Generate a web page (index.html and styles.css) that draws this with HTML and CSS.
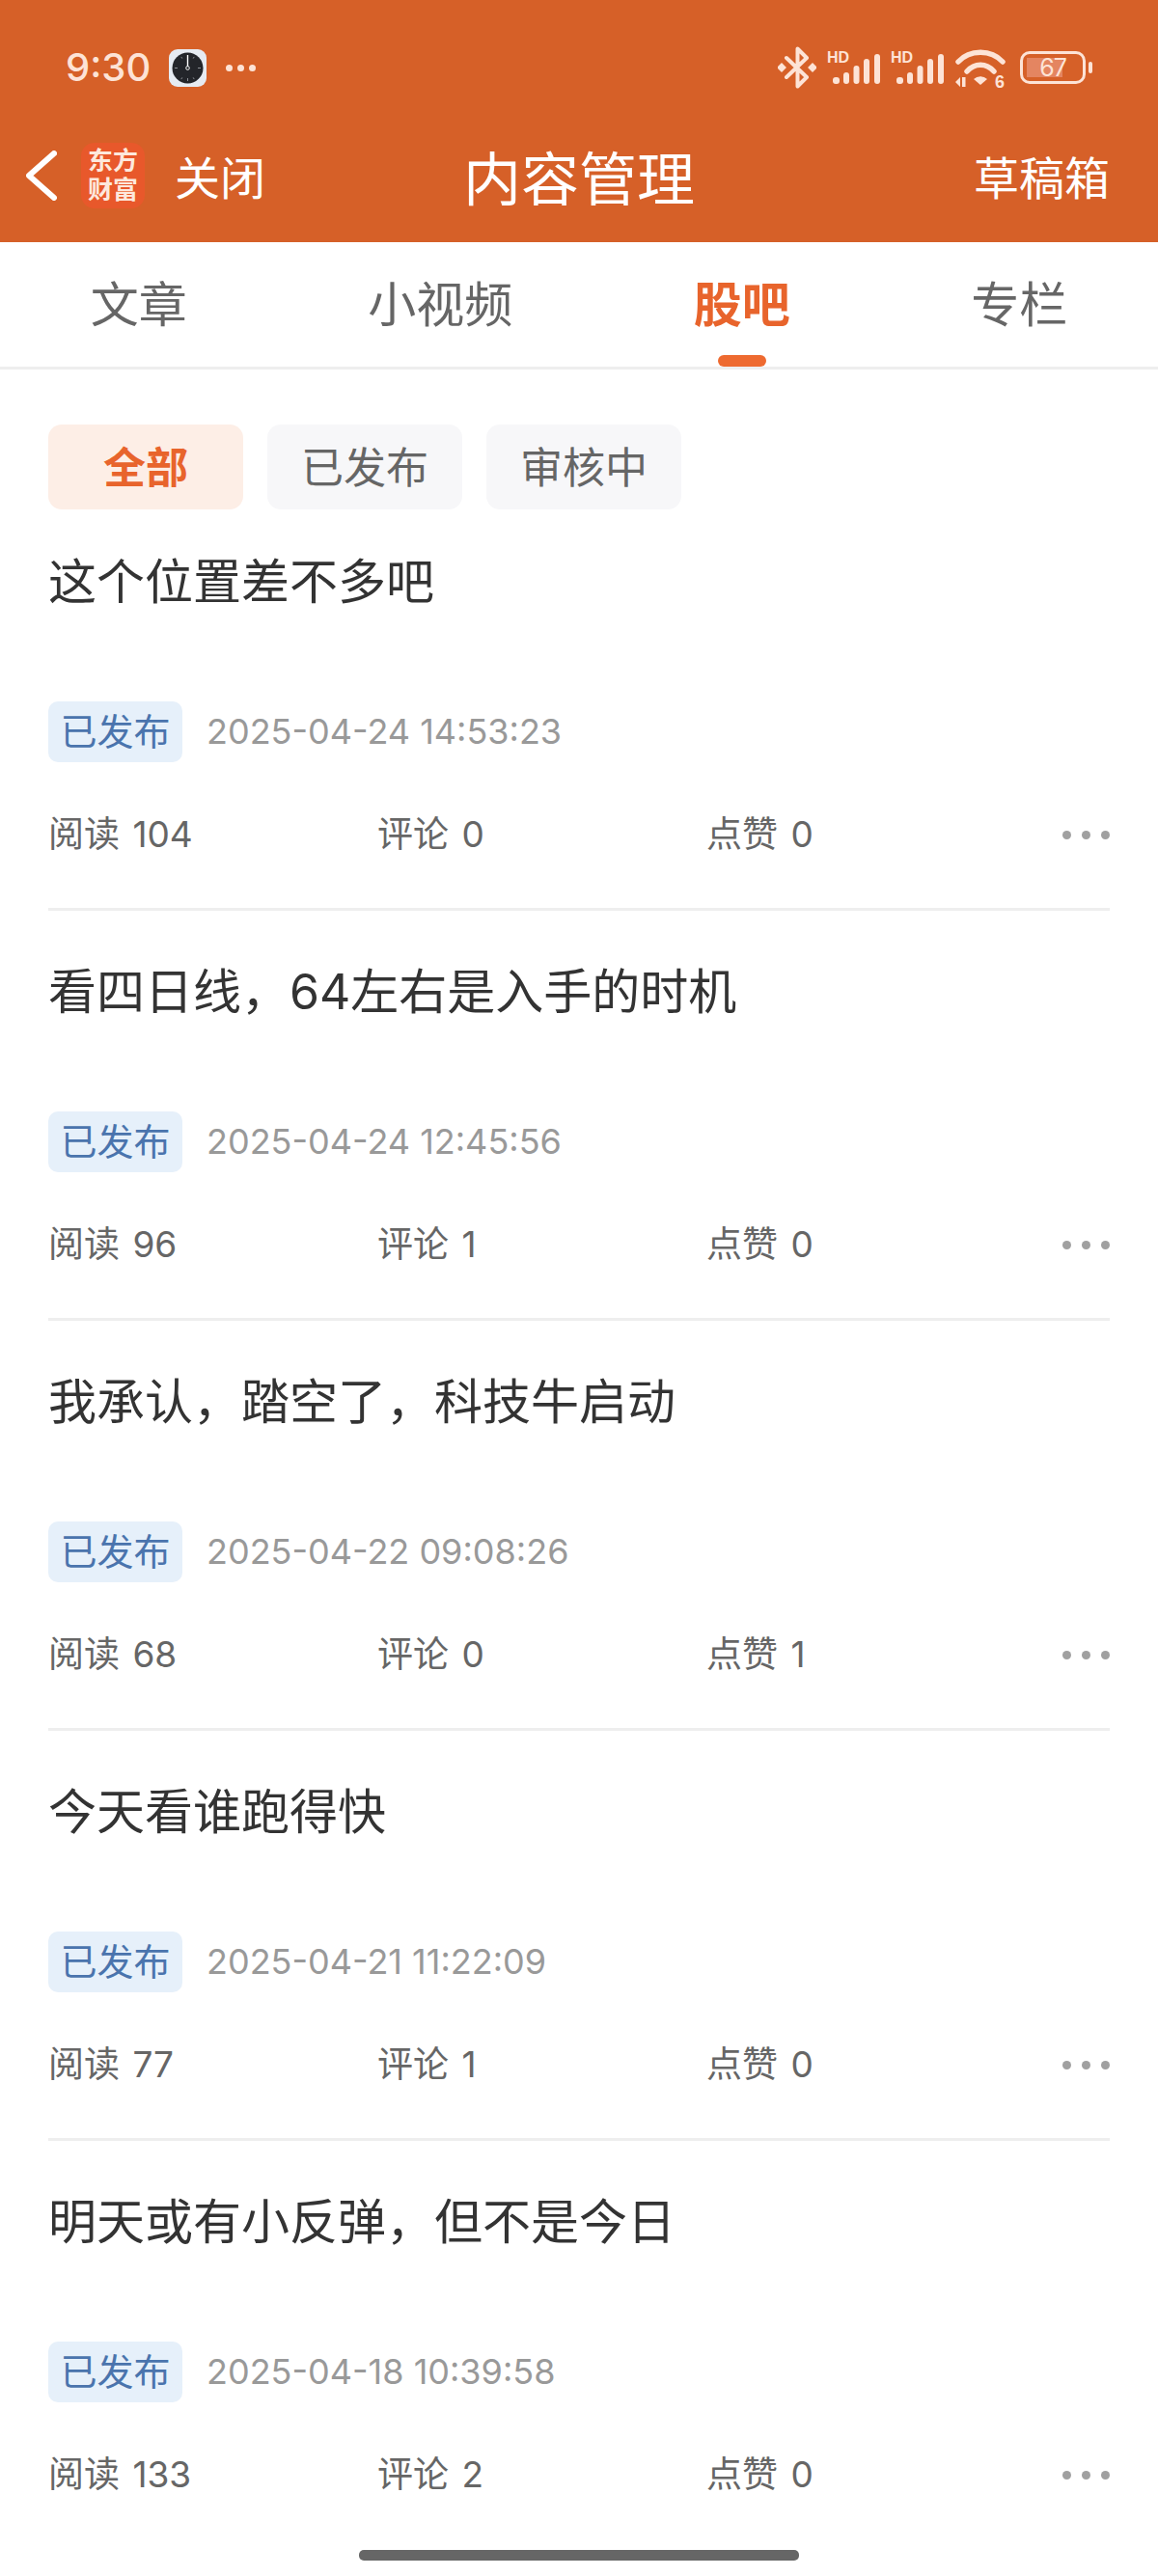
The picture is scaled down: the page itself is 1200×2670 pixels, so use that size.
FILE: index.html
```html
<!DOCTYPE html>
<html lang="zh-CN">
<head>
<meta charset="utf-8">
<title>内容管理</title>
<link rel="stylesheet" href="styles.css">
</head>
<body>

<div class="top">
  <div class="status">
    <span class="time">9:30</span>
    <svg class="clock" width="39" height="39" viewBox="0 0 39 39">
      <rect width="39" height="39" rx="9" fill="#e6ebf2"/>
      <circle cx="19.5" cy="19.5" r="16" fill="#23252a"/>
      <path d="M19.5 6v3M19.5 30v3M6 19.5h3M30 19.5h3M12.8 7.9l1 1.7M26.2 7.9l-1 1.7M12.8 31.1l1-1.7M26.2 31.1l-1-1.7" stroke="#8b8e94" stroke-width="1"/>
      <path d="M19.5 6v12" stroke="#fff" stroke-width="1.4"/>
      <circle cx="19.5" cy="19.5" r="1.8" fill="#23252a" stroke="#fff" stroke-width="1"/>
    </svg>
    <span class="more-dots"><i></i><i></i><i></i></span>
    <span class="status-right">
      <svg width="40" height="44" viewBox="0 0 40 44" fill="none">
        <path d="M9 12l21 20-9.500 9.500V2.500L30 12 9 32" stroke="#fde3d6" stroke-width="4" stroke-linejoin="round" stroke-linecap="round"/>
        <rect x="0.500" y="18.500" width="7" height="7" transform="rotate(45 4 22)" fill="#fde3d6"/>
        <rect x="32.500" y="18.500" width="7" height="7" transform="rotate(45 36 22)" fill="#fde3d6"/>
      </svg>
      <svg class="signal" width="55" height="36" viewBox="0 0 55 36">
        <text x="0" y="13" class="hd">HD</text>
        <rect x="6" y="28" width="7" height="7" rx="3" fill="#fde3d6"/>
        <rect x="17" y="23" width="6" height="12" rx="3" fill="#fde3d6"/>
        <rect x="27.500" y="16" width="6" height="19" rx="3" fill="#fde3d6"/>
        <rect x="38" y="9" width="6" height="26" rx="3" fill="#fde3d6"/>
        <rect x="49" y="4" width="6" height="31" rx="3" fill="#fde3d6"/>
      </svg>
      <svg class="signal" width="55" height="36" viewBox="0 0 55 36">
        <text x="0" y="13" class="hd">HD</text>
        <rect x="6" y="28" width="7" height="7" rx="3" fill="#fde3d6"/>
        <rect x="17" y="23" width="6" height="12" rx="3" fill="#fde3d6"/>
        <rect x="27.500" y="16" width="6" height="19" rx="3" fill="#fde3d6"/>
        <rect x="38" y="9" width="6" height="26" rx="3" fill="#fde3d6"/>
        <rect x="49" y="4" width="6" height="31" rx="3" fill="#fde3d6"/>
      </svg>
      <svg class="wifi" width="52" height="46" viewBox="0 0 52 46" fill="none">
        <path d="M3 14C15 1 37 1 49 14" stroke="#fde3d6" stroke-width="5.500" stroke-linecap="round"/>
        <path d="M12 24C20 15 32 15 40 24" stroke="#fde3d6" stroke-width="5.500" stroke-linecap="round"/>
        <path d="M19 32a10 10 0 0 1 14 0l-7 6z" fill="#fde3d6"/>
        <path d="M0 35l5-5v10zM7 30h3.500v10H7z" fill="#fde3d6"/>
        <text x="41" y="41" class="wifi-six">6</text>
      </svg>
      <span class="battery"><span class="battery-num">67</span></span>
      <span class="battery-nub"></span>
    </span>
  </div>

  <div class="nav">
    <div class="nav-left">
      <svg class="back" width="32" height="52" viewBox="0 0 32 52" fill="none">
        <path d="M29 3L3 26l26 23" stroke="#fff" stroke-width="6" stroke-linecap="round" stroke-linejoin="round"/>
      </svg>
      <span class="logo">东方<br>财富</span>
      <span class="close">关闭</span>
    </div>
    <div class="nav-title">内容管理</div>
    <div class="nav-right">草稿箱</div>
  </div>
</div>

<div class="tabs">
  <span class="tab">文章</span>
  <span class="tab">小视频</span>
  <span class="tab active">股吧</span>
  <span class="tab">专栏</span>
</div>

<div class="chips">
  <span class="chip on">全部</span>
  <span class="chip">已发布</span>
  <span class="chip">审核中</span>
</div>

<div class="list">
  <div class="item">
    <div class="title">这个位置差不多吧</div>
    <div class="meta"><span class="tag">已发布</span><span class="date">2025-04-24 14:53:23</span></div>
    <div class="stats">
      <span class="stat">阅读 104</span><span class="stat">评论 0</span><span class="stat">点赞 0</span>
      <span class="dots"><i></i><i></i><i></i></span>
    </div>
  </div>
  <div class="item">
    <div class="title">看四日线，64左右是入手的时机</div>
    <div class="meta"><span class="tag">已发布</span><span class="date">2025-04-24 12:45:56</span></div>
    <div class="stats">
      <span class="stat">阅读 96</span><span class="stat">评论 1</span><span class="stat">点赞 0</span>
      <span class="dots"><i></i><i></i><i></i></span>
    </div>
  </div>
  <div class="item">
    <div class="title">我承认，踏空了，科技牛启动</div>
    <div class="meta"><span class="tag">已发布</span><span class="date">2025-04-22 09:08:26</span></div>
    <div class="stats">
      <span class="stat">阅读 68</span><span class="stat">评论 0</span><span class="stat">点赞 1</span>
      <span class="dots"><i></i><i></i><i></i></span>
    </div>
  </div>
  <div class="item">
    <div class="title">今天看谁跑得快</div>
    <div class="meta"><span class="tag">已发布</span><span class="date">2025-04-21 11:22:09</span></div>
    <div class="stats">
      <span class="stat">阅读 77</span><span class="stat">评论 1</span><span class="stat">点赞 0</span>
      <span class="dots"><i></i><i></i><i></i></span>
    </div>
  </div>
  <div class="item">
    <div class="title">明天或有小反弹，但不是今日</div>
    <div class="meta"><span class="tag">已发布</span><span class="date">2025-04-18 10:39:58</span></div>
    <div class="stats">
      <span class="stat">阅读 133</span><span class="stat">评论 2</span><span class="stat">点赞 0</span>
      <span class="dots"><i></i><i></i><i></i></span>
    </div>
  </div>
</div>

<div class="home-bar"></div>

</body>
</html>
```

FILE: styles.css
```css
html, body {margin:0; padding:0; background:#fff;}
body {width:1200px; height:2670px; overflow:hidden; font-family:"Noto Sans CJK SC", "Noto Sans", sans-serif; color:#333;}
i {display:block;}

/* orange header */
.top {background:#d66028; color:#fff; height:251px; box-sizing:border-box; padding-top:8px;}
.status {height:124px; display:flex; align-items:center; padding:0 68px 0 68px; color:#fde3d6;}
.time {font:500 40px/1 Inter, sans-serif; width:107px;}
.clock {display:block;}
.more-dots {display:flex; gap:5px; margin-left:20px;}
.more-dots i {width:7px; height:7px; border-radius:50%; background:#fde3d6;}
.status-right {margin-left:auto; display:flex; align-items:center;}
.status-right svg {display:block;}
.signal {margin-left:11px;}
.hd {font:700 16px "Liberation Sans", sans-serif; fill:#fde3d6;}
.wifi {margin:6px 0 0 12px;}
.wifi-six {font:700 18px "Liberation Sans", sans-serif; fill:#fde3d6;}
.battery {box-sizing:border-box; width:68px; height:34px; margin-left:15px; border:3px solid #fde3d6; border-radius:10px; background:linear-gradient(to right, #e48561 0, #e48561 68%, transparent 68%) no-repeat 4px 4px / 54px 20px; display:flex; align-items:center; justify-content:center;}
.battery-num {font:400 25px/1 Inter, sans-serif; letter-spacing:-1px; color:#fde3d6;}
.battery-nub {width:4px; height:12px; margin-left:3px; border-radius:2px; background:#fde3d6;}

.nav {height:100px; display:grid; grid-template-columns:1fr auto 1fr; align-items:center; padding:0 50px;}
.nav-left {display:flex; align-items:center;}
.back {display:block; margin-left:-23px;}
.logo {width:66px; height:68px; margin-left:25px; border-radius:14px; background:#e8582b; font:700 26px/30px Inter, "Noto Sans CJK SC", sans-serif; text-align:center; padding-top:4px; box-sizing:border-box; color:#fde8dc;}
.close {font-size:47px; line-height:60px; margin-left:31px;}
.nav-title {font-size:60px; line-height:80px;}
.nav-right {font-size:47px; line-height:60px; text-align:right;}

/* tabs */
.tabs {height:132px; box-sizing:border-box; border-bottom:3px solid #eee; display:flex; justify-content:space-around;}
.tab {position:relative; font-size:50px; line-height:122px; height:129px; color:#666;}
.tab.active {color:#e8642c; font-weight:700;}
.tab.active:after {content:""; position:absolute; left:50%; bottom:0; width:50px; height:12px; margin-left:-25px; border-radius:6px; background:#ee6a30;}

/* filter chips */
.chips {display:flex; gap:25px; padding:57px 50px 0;}
.chip {width:202px; height:88px; border-radius:14px; background:#f7f7f9; color:#666; font-size:44px; line-height:84px; text-align:center;}
.chip.on {background:#fdeee6; color:#e8642c; font-weight:700;}

/* post list */
.list {padding:0 50px;}
.item {padding:59px 0 51px; border-bottom:3px solid #eee;}
.item:first-child {padding-top:50px;}
.item:last-child {border-bottom:0;}
.title {font:400 50px/50px Inter, "Noto Sans CJK SC", sans-serif; color:#333;}
.meta {display:flex; align-items:center; margin-top:99px; height:63px;}
.tag {width:139px; height:63px; border-radius:10px; background:#e6f0fa; color:#4a74ad; font-size:38px; line-height:58px; text-align:center;}
.date {margin-left:25px; font:400 36px/63px Inter, sans-serif; color:#999;}
.stats {display:flex; align-items:center; margin-top:50px; height:50px;}
.stat {width:341px; font:400 37px/50px Inter, "Noto Sans CJK SC", sans-serif; word-spacing:3px; color:#666;}
.dots {margin-left:auto; display:flex; gap:11px;}
.dots i {width:9px; height:9px; border-radius:50%; background:#a0a0a0;}

.home-bar {width:456px; height:11px; margin:2px auto 0; border-radius:5px; background:#666;}
```
